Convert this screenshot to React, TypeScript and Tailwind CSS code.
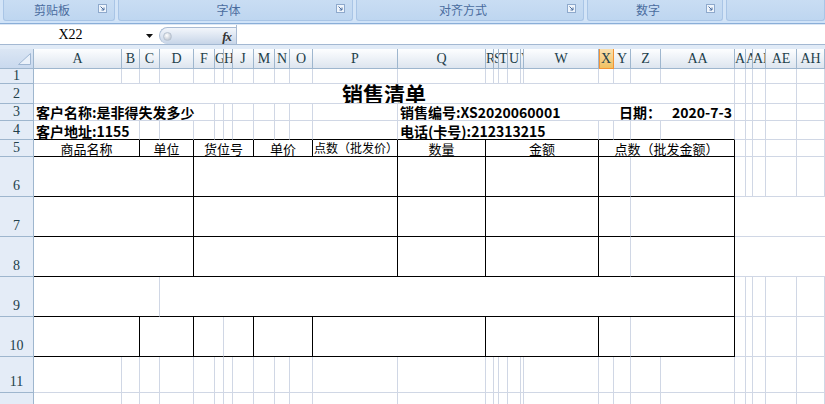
import React from 'react'

type Seg = { s: number; t?: string; r?: 'k' | 'g' | 'n'; b?: 'k' | 'g'; c?: string }

const cols: [string, number][] = [
  ['A', 88], ['B', 18], ['C', 20], ['D', 34], ['F', 21], ['G', 9], ['H', 9], ['J', 21], ['M', 21], ['N', 15],
  ['O', 23], ['P', 85], ['Q', 88], ['R', 8], ['S', 5], ['T', 9], ['U', 13], ['V', 3], ['W', 75], ['X', 15],
  ['Y', 17], ['Z', 30], ['AA', 74], ['AB', 11], ['AC', 7], ['AD', 13], ['AE', 31], ['AH', 28], ['AI', 36],
]

const span: Record<number, string> = {
  1: 'col-span-1', 2: 'col-span-2', 3: 'col-span-3', 4: 'col-span-4', 5: 'col-span-5', 6: 'col-span-6',
  7: 'col-span-7', 8: 'col-span-8', 20: 'col-span-20', 23: 'col-span-23',
}
const rb = { k: 'border-r border-r-black', g: 'border-r border-r-[#d0d7e5]', n: '' }
const bb = { k: 'border-b border-b-black', g: 'border-b border-b-[#d0d7e5]' }

const singles = (n: number, b: 'k' | 'g' = 'g'): Seg[] => Array.from({ length: n }, () => ({ s: 1, b }))
const right = (merged = false): Seg[] => (merged ? [{ s: 6, r: 'n' }] : singles(6))

const bold = 'font-bold text-[14px] items-end pb-[1px] pl-[2px]'
const head = 'text-[13px] items-center justify-center'
const K = (s: number, t?: string, c?: string, r: 'k' | 'g' = 'k'): Seg => ({ s, t, r, b: 'k', c })

const rows: { n: string; cells: Seg[] }[] = [
  { n: '1', cells: singles(29) },
  {
    n: '2',
    cells: [{ s: 23, t: '销售清单', c: 'text-[21px] font-bold items-center justify-center' }, ...right()],
  },
  {
    n: '3',
    cells: [
      { s: 5, t: '客户名称:是非得失发多少', c: bold },
      ...singles(7),
      { s: 7, t: '销售编号:XS2020060001', c: bold, r: 'n' },
      { s: 3, t: '日期：', c: bold + ' justify-end', r: 'n' },
      { s: 1, t: '2020-7-3', c: 'font-bold text-[14px] items-end pb-[1px] justify-end pr-[2px]' },
      ...right(),
    ],
  },
  {
    n: '4',
    cells: [
      { s: 2, t: '客户地址:1155', c: bold, b: 'k' },
      ...singles(10, 'k'),
      { s: 7, t: '电话(卡号):212313215', c: bold, b: 'k' },
      ...singles(4, 'k'),
      ...right(),
    ],
  },
  {
    n: '5',
    cells: [
      K(2, '商品名称', head), K(2, '单位', head), K(4, '货位号', head), K(3, '单价', head),
      K(1, '点数（批发价）', 'text-[12px] items-center pl-[1px]'), K(1, '数量', head), K(6, '金额', head),
      K(4, '点数（批发金额）', head), ...right(),
    ],
  },
  ...['6', '7', '8'].map((n) => ({
    n,
    cells: [K(4), K(8), K(1), K(6), K(2, undefined, undefined, 'g'), K(2), ...right(n !== '6')],
  })),
  { n: '9', cells: [K(3, undefined, undefined, 'g'), K(20), ...right()] },
  {
    n: '10',
    cells: [
      K(2), K(2), K(2, undefined, undefined, 'g'), K(2), K(3), K(2), K(6), K(2, undefined, undefined, 'g'), K(2),
      ...right(),
    ],
  },
  { n: '11', cells: singles(29) },
  { n: '12', cells: singles(29) },
]

function Launcher() {
  return (
    <svg width="9" height="9" viewBox="0 0 9 9" className="shrink-0">
      <rect x="0.5" y="0.5" width="8" height="8" fill="#eef4fb" stroke="#8ea9cc" />
      <path d="M2.5 2.5L6 6M6 3.5V6H3.5" fill="none" stroke="#4d6f9f" strokeWidth="1" />
    </svg>
  )
}

function Group({ label, w, grow }: { label?: string; w?: string; grow?: boolean }) {
  return (
    <div
      className={`${w ?? ''} ${grow ? 'flex-1' : ''} h-full flex items-center rounded-b-[3px] border border-t-0 border-[#a9c5e6] bg-linear-to-b from-[#c9ddf3] to-[#bed6f0]`}
    >
      {label && (
        <>
          <span className="flex-1 text-center text-[12px] leading-none text-[#4a6c9e] pl-[2px]">{label}</span>
          <span className="w-[16px] flex justify-start mb-[4px]">
            <Launcher />
          </span>
        </>
      )}
    </div>
  )
}

function Ribbon() {
  return (
    <div className="h-[25px] flex flex-col bg-[#d3e4f7]">
      <div className="h-[21px] flex gap-[3px] pl-[3px]">
        <Group label="剪贴板" w="w-[112px]" />
        <Group label="字体" w="w-[235px]" />
        <Group label="对齐方式" w="w-[228px]" />
        <Group label="数字" w="w-[136px]" />
        <Group grow />
      </div>
      <div className="h-[2px] bg-[#d0e3f8]" />
      <div className="h-[1px] bg-[#8aaed8]" />
      <div className="h-[1px] bg-[#dce7f4]" />
    </div>
  )
}

function FormulaBar() {
  return (
    <div className="h-[19px] flex bg-white">
      <div className="w-[159px] flex items-center">
        <span className="w-[141px] text-center font-['Liberation_Serif',serif] text-[14px] leading-none text-black">
          X22
        </span>
        <svg width="7" height="4" viewBox="0 0 7 4" className="ml-[5px] mt-[2px]">
          <path d="M0 0H7L3.5 4Z" fill="#111" />
        </svg>
      </div>
      <div className="w-[77px] mt-[2px] flex items-center rounded-l-full border border-r-0 border-b-0 border-[#a9bbd3] bg-linear-to-b from-[#f3f6fb] to-[#c7d5e8]">
        <span className="ml-[3px] w-[9px] h-[9px] rounded-full bg-radial-[at_40%_35%] from-[#ffffff] to-[#aab5c4] border border-[#b8c3d1]" />
        <span className="ml-auto mr-[5px] font-['Liberation_Serif',serif] italic font-bold text-[13px] leading-none text-[#333] tracking-[-1px]">
          fx
        </span>
      </div>
      <div className="flex-1 border-l border-[#a9bbd3]" />
    </div>
  )
}

function Sheet() {
  return (
    <div className="grid w-[861px] grid-cols-[34px_88px_18px_20px_34px_21px_9px_9px_21px_21px_15px_23px_85px_88px_8px_5px_9px_13px_3px_75px_15px_17px_30px_74px_11px_7px_13px_31px_28px_36px] grid-rows-[20px_15px_20px_17px_19px_17px_40px_40px_40px_40px_40px_36px_30px] font-['Noto_Sans_CJK_SC',sans-serif] text-black">
      <div className="relative border-r border-b border-[#9eb6ce] bg-linear-to-b from-[#dbe6f4] to-[#c9d9ee]">
        <svg width="13" height="12" viewBox="0 0 13 12" className="absolute right-[2px] bottom-[3px]">
          <path d="M12.5 0.5V11.5H0.5Z" fill="#eaf1fa" stroke="#9fb6d2" />
        </svg>
      </div>
      {cols.map(([name]) => (
        <div
          key={name}
          className={`overflow-hidden whitespace-nowrap text-center border-r border-b font-['Liberation_Serif',serif] text-[14px] leading-[19px] text-[#22404a] ${
            name === 'X'
              ? 'bg-linear-to-b from-[#fae0ae] to-[#f1c15f] border-[#f29436] shadow-[inset_1px_0_0_#f29436]'
              : 'bg-linear-to-b from-[#fdfeff] to-[#dde5ef] border-[#9eb6ce]'
          }`}
        >
          {name}
        </div>
      ))}
      {rows.map((row) => (
        <React.Fragment key={row.n}>
          <div
            className={`flex justify-center border-r border-b border-[#9eb6ce] bg-[#e4ecf7] font-['Liberation_Serif',serif] text-[14px] leading-none text-[#22404a] ${
              Number(row.n) > 5 ? 'items-end pb-[3px]' : 'items-center'
            }`}
          >
            {row.n}
          </div>
          {row.cells.map((c, i) => (
            <div
              key={i}
              className={`${span[c.s]} flex overflow-hidden whitespace-nowrap leading-none ${rb[c.r ?? 'g']} ${bb[c.b ?? 'g']} ${c.c ?? ''}`}
            >
              {c.t}
            </div>
          ))}
        </React.Fragment>
      ))}
    </div>
  )
}

export default function App() {
  return (
    <div className="w-[825px] h-[404px] overflow-hidden bg-white font-['Noto_Sans_CJK_SC',sans-serif]">
      <Ribbon />
      <FormulaBar />
      <div className="h-[5px] border-t border-[#a3b8d2] bg-[#e1ebf7]" />
      <Sheet />
    </div>
  )
}
